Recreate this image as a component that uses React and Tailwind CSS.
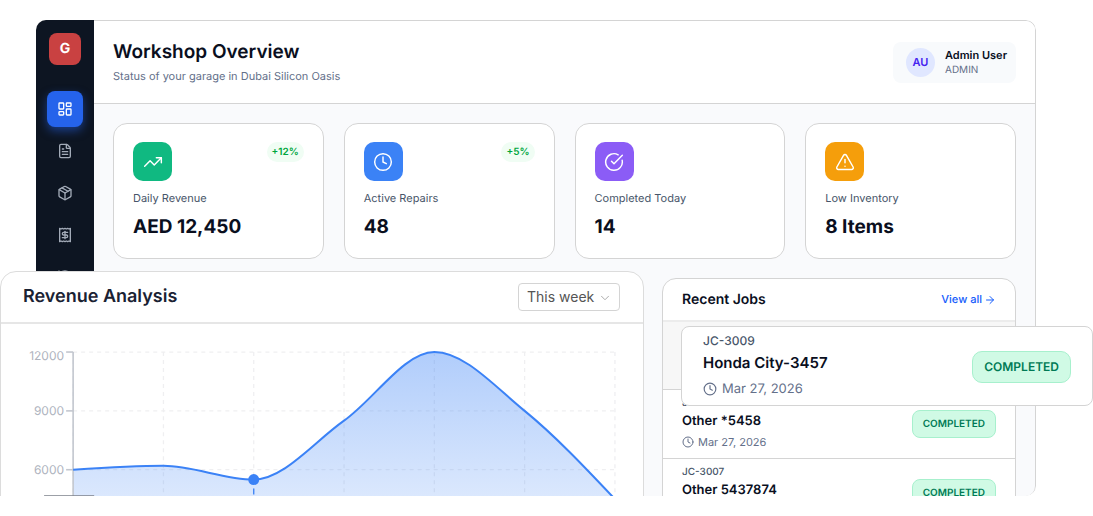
import {
  ArrowRight,
  ChevronDown,
  CircleCheckBig,
  Clock,
  FileText,
  History,
  LayoutDashboard,
  Package,
  TrendingUp,
  TriangleAlert,
} from "lucide-react";

const stats = [
  { label: "Daily Revenue", value: "AED 12,450", change: "+12%", icon: TrendingUp, color: "bg-[#10b981]" },
  { label: "Active Repairs", value: "48", change: "+5%", icon: Clock, color: "bg-[#3b82f6]" },
  { label: "Completed Today", value: "14", icon: CircleCheckBig, color: "bg-[#8b5cf6]" },
  { label: "Low Inventory", value: "8 Items", icon: TriangleAlert, color: "bg-[#f59e0b]" },
];

const jobs = [
  { id: "JC-3008", title: "Other *5458", date: "Mar 27, 2026" },
  { id: "JC-3007", title: "Other 5437874", date: "Mar 27, 2026" },
];

const revenue = [6000, 6200, 5500, 8500, 12000, 9000, 4500];

// Chart geometry, in viewBox units
const CHART = { left: 72, right: 613, top: 28, bottom: 263, max: 12000 };
const xAt = (i) =>
  CHART.left + ((CHART.right - CHART.left) / (revenue.length - 1)) * i;
const yAt = (v) =>
  CHART.bottom - ((CHART.bottom - CHART.top) * v) / CHART.max;

// Monotone cubic curve through the points
function monotonePath(points) {
  const n = points.length;
  const slopes = [];
  for (let i = 0; i < n - 1; i++) {
    slopes.push(
      (points[i + 1][1] - points[i][1]) / (points[i + 1][0] - points[i][0])
    );
  }
  const tangents = points.map((_, i) => {
    if (i === 0 || i === n - 1) return 0;
    const a = slopes[i - 1];
    const b = slopes[i];
    if (a * b <= 0) return 0;
    return Math.sign(a) * Math.min(Math.abs(a), Math.abs(b), Math.abs(a + b) / 4) * 2;
  });
  tangents[0] = (3 * slopes[0] - tangents[1]) / 2;
  tangents[n - 1] = (3 * slopes[n - 2] - tangents[n - 2]) / 2;

  let d = `M${points[0][0]},${points[0][1]}`;
  for (let i = 0; i < n - 1; i++) {
    const [x0, y0] = points[i];
    const [x1, y1] = points[i + 1];
    const dx = (x1 - x0) / 3;
    d += `C${x0 + dx},${y0 + dx * tangents[i]} ${x1 - dx},${y1 - dx * tangents[i + 1]} ${x1},${y1}`;
  }
  return d;
}

function ReceiptDollar({ className }) {
  return (
    <svg
      viewBox="0 0 24 24"
      fill="none"
      stroke="currentColor"
      strokeWidth="2"
      strokeLinecap="round"
      strokeLinejoin="round"
      className={className}
    >
      <path d="M4 2v20l2-1 2 1 2-1 2 1 2-1 2 1 2-1 2 1V2l-2 1-2-1-2 1-2-1-2 1-2-1-2 1Z" />
      <path d="M16 8h-6a2 2 0 1 0 0 4h4a2 2 0 1 1 0 4H8" />
      <path d="M12 17.5v-11" />
    </svg>
  );
}

function Sidebar() {
  const items = [
    { name: "Job cards", icon: FileText },
    { name: "Inventory", icon: Package },
    { name: "Invoices", icon: ReceiptDollar },
    { name: "History", icon: History },
  ];

  return (
    <aside className="flex w-[58px] shrink-0 flex-col items-center bg-[#0d1522] pt-[13px]">
      <div className="flex size-8 items-center justify-center rounded-lg bg-[#c94141] text-sm font-bold text-white">
        G
      </div>
      <nav className="mt-[26px] flex flex-col items-center gap-1.5">
        <button
          aria-label="Dashboard"
          className="flex size-9 items-center justify-center rounded-lg bg-[#2563eb] text-white shadow-[0_4px_10px_rgba(37,99,235,0.5)]"
        >
          <LayoutDashboard className="size-4" />
        </button>
        {items.map(({ name, icon: Icon }) => (
          <button
            key={name}
            aria-label={name}
            className="flex size-9 items-center justify-center rounded-lg text-[#a3abb8]"
          >
            <Icon className="size-4" />
          </button>
        ))}
      </nav>
    </aside>
  );
}

function Header() {
  return (
    <header className="flex items-center justify-between border-b border-[#d4d4d4] bg-white px-[19px] py-[19px]">
      <div>
        <h1 className="text-[19px] leading-6 font-semibold text-[#0a0f1e]">
          Workshop Overview
        </h1>
        <p className="mt-1 text-[11px] leading-4 text-[#64708a]">
          Status of your garage in Dubai Silicon Oasis
        </p>
      </div>
      <div className="flex items-center gap-2.5 rounded-lg bg-[#f8fafc] py-1.5 pr-[9px] pl-[13px]">
        <div className="flex size-[29px] items-center justify-center rounded-full bg-[#e0e7ff] text-[11px] font-semibold text-[#4422f0]">
          AU
        </div>
        <div>
          <p className="text-[11px] leading-[15px] font-semibold text-[#0a0f1e]">Admin User</p>
          <p className="text-[10px] leading-[14px] text-[#64708a]">ADMIN</p>
        </div>
      </div>
    </header>
  );
}

function StatCard({ label, value, change, icon: Icon, color }) {
  return (
    <div className="rounded-[14px] border border-[#d4d4d4] bg-white px-[19px] pt-[18px] pb-[17px]">
      <div className="flex items-start justify-between">
        <div className={`flex size-[39px] items-center justify-center rounded-[10px] text-white ${color}`}>
          <Icon className="size-5" strokeWidth={1.75} />
        </div>
        {change && (
          <span className="rounded-full bg-[#f0fdf4] px-[5px] text-[10px] leading-5 font-semibold text-[#00a63e]">
            {change}
          </span>
        )}
      </div>
      <p className="mt-2 text-[11px] leading-[18px] text-[#475569]">{label}</p>
      <p className="mt-1.5 text-[19px] leading-7 font-bold text-[#0a0f1e]">{value}</p>
    </div>
  );
}

function StatusBadge({ large }) {
  return (
    <span
      className={`border border-[#a7f0cd] bg-[#d0fae5] font-semibold text-[#007a55] ${
        large
          ? "rounded-[10px] px-[11px] text-xs leading-[30px]"
          : "rounded-lg px-2.5 text-[10px] leading-[26px]"
      }`}
    >
      COMPLETED
    </span>
  );
}

function RecentJobs() {
  return (
    <section className="ml-auto w-[354px] overflow-hidden rounded-t-[14px] border border-[#d4d4d4] bg-white">
      <div className="flex items-center justify-between border-b-2 border-[#ececec] px-[19px] py-2.5">
        <h2 className="text-sm leading-[21px] font-semibold text-[#0a0f1e]">Recent Jobs</h2>
        <a href="#jobs" className="flex items-center gap-0.5 text-[11px] font-medium text-[#155dfc]">
          View all
          <ArrowRight className="size-3" />
        </a>
      </div>
      {/* slot of the job that is lifted out of the list */}
      <div className="h-[68px] border-b border-[#d4d4d4] bg-[#f7f7f7]" />
      {jobs.map((job) => (
        <div
          key={job.id}
          className="flex items-center justify-between border-b border-[#d4d4d4] px-[19px] py-1.5"
        >
          <div>
            <p className="text-[10px] leading-[14px] font-medium text-[#475569]">{job.id}</p>
            <p className="text-[13px] leading-[22px] font-semibold text-[#0a0f1e]">{job.title}</p>
            <p className="flex items-center gap-1 text-[11px] leading-5 text-[#64708a]">
              <Clock className="size-3" />
              {job.date}
            </p>
          </div>
          <StatusBadge />
        </div>
      ))}
    </section>
  );
}

function LiftedJob() {
  return (
    <div className="absolute top-[326px] right-0 flex w-[412px] items-center justify-between rounded-lg border border-[#d4d4d4] bg-white px-[21px] pt-1.5 pb-1">
      <div>
        <p className="text-xs leading-4 font-medium text-[#475569]">JC-3009</p>
        <p className="text-[15px] leading-7 font-semibold text-[#0a0f1e]">Honda City-3457</p>
        <p className="flex items-center gap-[5px] text-[13px] leading-6 text-[#64708a]">
          <Clock className="size-3.5" />
          Mar 27, 2026
        </p>
      </div>
      <StatusBadge large />
    </div>
  );
}

function RevenueChart() {
  const line = monotonePath(revenue.map((v, i) => [xAt(i), yAt(v)]));
  const area = `${line}L${CHART.right},${CHART.bottom}L${CHART.left},${CHART.bottom}Z`;

  return (
    <svg viewBox="0 0 641 300" className="block w-full">
      <defs>
        <linearGradient id="revenueFill" x1="0" y1="0" x2="0" y2="1">
          <stop offset="0" stopColor="#3b82f6" stopOpacity="0.4" />
          <stop offset="1" stopColor="#3b82f6" stopOpacity="0.05" />
        </linearGradient>
      </defs>
      <g stroke="#efeff1" strokeWidth="1.3" strokeDasharray="4 4">
        {[12000, 9000, 6000, 3000].map((v) => (
          <line key={v} x1={CHART.left} x2={CHART.right} y1={yAt(v)} y2={yAt(v)} />
        ))}
        {revenue.map((_, i) => (
          <line key={i} x1={xAt(i)} x2={xAt(i)} y1={CHART.top} y2={CHART.bottom} />
        ))}
      </g>
      <path d={area} fill="url(#revenueFill)" />
      <g stroke="#c3c7cf" strokeWidth="1.6">
        <line x1={CHART.left} x2={CHART.left} y1={CHART.top} y2={CHART.bottom} />
        {[12000, 9000, 6000].map((v) => (
          <line key={v} x1={CHART.left - 7} x2={CHART.left} y1={yAt(v)} y2={yAt(v)} />
        ))}
      </g>
      <g fill="#aeb3be" fontSize="12" textAnchor="end">
        <text x="63" y="36">12000</text>
        <text x="63" y="91">9000</text>
        <text x="63" y="150">6000</text>
      </g>
      <path d={line} fill="none" stroke="#3b82f6" strokeWidth="2" />
      <line
        x1={xAt(2)}
        x2={xAt(2)}
        y1={yAt(5500) + 9}
        y2={CHART.bottom}
        stroke="#3b82f6"
        strokeWidth="1.3"
        strokeDasharray="6 6"
      />
      <circle cx={xAt(2)} cy={yAt(5500)} r="5.5" fill="#3b82f6" />
      <line x1="43" x2="93" y1="171.5" y2="171.5" stroke="#7b808a" />
    </svg>
  );
}

function RevenueAnalysis() {
  return (
    <section className="absolute top-[271px] right-[449px] left-0 rounded-t-2xl border border-[#dcdcdc] bg-white">
      <div className="flex items-center justify-between border-b-2 border-[#e6e6e6] py-[11px] pr-[23px] pl-[22px]">
        <h2 className="text-lg leading-7 font-semibold text-[#1a2233]">Revenue Analysis</h2>
        <div className="relative">
          <select
            aria-label="Period"
            className="block w-[102px] appearance-none rounded-sm border border-[#d4d4d4] bg-white pl-2 text-sm leading-[26px] text-[#555555]"
          >
            <option>This week</option>
            <option>This month</option>
          </select>
          <ChevronDown
            className="pointer-events-none absolute top-2 right-2 size-3.5 text-[#a0a0a0]"
            strokeWidth={1.5}
          />
        </div>
      </div>
      <RevenueChart />
    </section>
  );
}

export default function App() {
  return (
    <div className="h-screen bg-white pb-5 font-['Inter',sans-serif] antialiased [text-rendering:geometricPrecision]">
      <div className="relative h-full overflow-hidden pt-5 pr-[57px] pl-9">
        <div className="flex h-full overflow-hidden rounded-[10px]">
          <Sidebar />
          <div className="flex min-w-0 flex-1 flex-col overflow-hidden rounded-r-[10px] border-t border-r border-[#d4d4d4] bg-[#f9fafc]">
            <Header />
            <main className="flex flex-col gap-[19px] px-[19px] pt-[19px]">
              <div className="grid grid-cols-4 gap-5">
                {stats.map((stat) => (
                  <StatCard key={stat.label} {...stat} />
                ))}
              </div>
              <RecentJobs />
            </main>
          </div>
        </div>
        <RevenueAnalysis />
        <LiftedJob />
      </div>
    </div>
  );
}
